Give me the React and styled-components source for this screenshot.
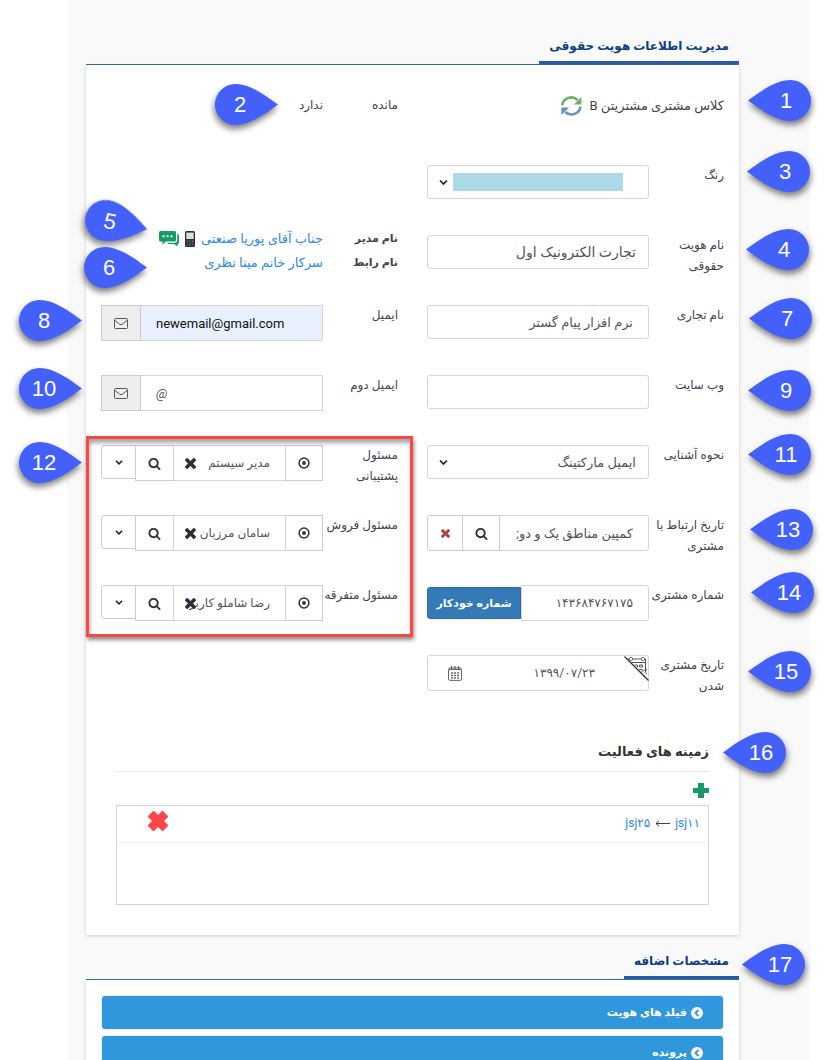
import React from "react";
import styled, { createGlobalStyle, css } from "styled-components";

const GlobalStyle = createGlobalStyle`
  *, *::before, *::after { box-sizing: border-box; }
  body { margin: 0; background: #fff; }
  button, input, select { font: inherit; color: inherit; margin: 0; }
`;

const Page = styled.div`
  position: relative;
  direction: rtl;
  min-height: 100vh;
  padding: 0 15px 0 67px;
  font-family: Roboto, "DejaVu Sans", sans-serif;
  font-size: 12px;
  line-height: 21px;
  color: #3d4552;
`;

const Frame = styled.main`
  min-height: 100vh;
  padding: 20px 71px 0 19px;
  background: #f9f9f9;
`;

const SectionHead = styled.header`
  display: flex;
  align-items: flex-end;
  height: 45px;
  border-bottom: 1px solid #2f71ae;
`;

const SectionTitle = styled.h2`
  margin: 0;
  padding: 0 10px 4px;
  border-bottom: 3px solid #2a5aa0;
  font-size: 12px;
  line-height: 21px;
  font-weight: 700;
  color: #0c3f87;
  white-space: nowrap;
`;

const Card = styled.section`
  background: #fff;
  box-shadow: 0 1px 4px rgba(0, 0, 0, 0.16);
  padding: ${(p) => (p.$list ? "16px 16px 24px" : "30px 15px")};
`;

const Columns = styled.div`
  display: grid;
  grid-template-columns: 1fr 1fr;
  column-gap: 29px;
`;

const Row = styled.div`
  display: grid;
  grid-template-columns: 75px minmax(0, 1fr);
  align-items: start;
  height: 70px;
`;

const labelText = css`
  white-space: nowrap;
  line-height: 21px;
`;
const Label = styled.label`${labelText}`;
const Caption = styled.span`${labelText}`;

const Highlight = styled.div`
  position: relative;
  &::after {
    content: "";
    position: absolute;
    inset: -9px -15px 18px;
    border: 3px solid #fb4646;
    box-shadow: 1px 3px 4px rgba(0, 0, 0, 0.45), inset 1px 4px 4px rgba(0, 0, 0, 0.35);
    pointer-events: none;
  }
`;

const ClassLine = styled.div`
  grid-column: 1 / -1;
  display: flex;
  align-items: center;
  gap: 7px;
  font-size: 13px;
  white-space: nowrap;
`;

const Contacts = styled.dl`
  display: grid;
  grid-template-columns: 75px minmax(0, 1fr);
  grid-auto-rows: 24px;
  align-content: start;
  height: 78px;
  margin: -8px 0 0;
  line-height: 24px;
`;
const ContactName = styled.dt`
  font-size: 11px;
  font-weight: 700;
  white-space: nowrap;
`;
const ContactValue = styled.dd`
  display: flex;
  align-items: center;
  gap: 6px;
  margin: 0;
  font-size: 13px;
  white-space: nowrap;
`;

const Link = styled.a`
  color: #2f8be6;
  text-decoration: none;
`;

const IconButton = styled.button`
  display: inline-flex;
  padding: 0;
  border: 0;
  background: none;
  cursor: pointer;
`;

const Field = styled.div`
  position: relative;
  display: flex;
  height: ${(p) => (p.$tall ? 36 : 34)}px;
`;

const Input = styled.input`
  flex: 1;
  min-width: 0;
  width: 100%;
  height: 100%;
  padding: 0 ${(p) => p.$pad || 15}px;
  border: 1px solid #d6d6d6;
  border-radius: ${(p) => (p.$square ? "0" : p.$joined ? "0 3px 3px 0" : "3px")};
  background: ${(p) => (p.$filled ? "#e8f0fe" : "#fff")};
  color: ${(p) => (p.$filled ? "#111" : "#555")};
  font-size: ${(p) => (p.$large ? 14 : p.$small ? 12 : 13)}px;
  &::placeholder { color: #555; font-style: italic; opacity: 1; }
`;

const Select = styled.select`
  appearance: none;
  width: 100%;
  height: 100%;
  padding: 0 12px 0 30px;
  border: 1px solid #d6d6d6;
  border-radius: 3px;
  background: #fff;
  color: #555;
  font-size: 13px;
`;

const SelectArrow = styled.span`
  position: absolute;
  left: 12px;
  top: 0;
  bottom: 0;
  display: flex;
  align-items: center;
  pointer-events: none;
`;

const Swatch = styled.span`
  position: absolute;
  inset: 8px 26px;
  background: #add8e6;
  pointer-events: none;
`;

const Addon = styled.span`
  order: 2;
  display: flex;
  align-items: center;
  justify-content: center;
  width: 40px;
  margin-right: -1px;
  border: 1px solid #ccc;
  background: #eee;
  color: #555;
`;

const ToolButton = styled.button`
  flex: none;
  display: flex;
  align-items: center;
  justify-content: center;
  width: ${(p) => p.$w}px;
  height: ${(p) => (p.$short ? 34 : 36)}px;
  margin-right: ${(p) => (p.$first ? 0 : -1)}px;
  padding: 0;
  border: 1px solid #ccc;
  border-radius: ${(p) => (p.$last ? "3px 0 0 3px" : "0")};
  background: #fff;
  color: #333;
  cursor: pointer;
`;

const PersonBox = styled.div`
  position: relative;
  flex: 1;
  min-width: 0;
  margin-right: -1px;
`;
const ClearButton = styled(IconButton)`
  position: absolute;
  left: 12px;
  top: 13px;
`;

const AutoButton = styled.button`
  flex: none;
  width: 94px;
  height: 32px;
  margin: 2px 0;
  padding: 0;
  border: 1px solid #2e6da4;
  border-radius: 3px 0 0 3px;
  background: #337ab7;
  && { color: #fff; font-weight: 700; font-size: 11px; }
  cursor: pointer;
`;

const CalendarButton = styled(IconButton)`
  position: absolute;
  left: 21px;
  top: 11px;
`;
const Corner = styled.span`
  position: absolute;
  right: 0;
  top: 1px;
  display: flex;
`;

const Activities = styled.div`
  padding: 16px 15px 0;
`;
const ActivitiesTitle = styled.h3`
  margin: 0 0 11px;
  padding-bottom: 9px;
  border-bottom: 1px solid #e6e6e6;
  font-size: 13px;
  line-height: 21px;
  color: #333;
`;
const ActivityTools = styled.div`
  display: flex;
  height: 22px;
`;
const ActivityList = styled.ul`
  height: 100px;
  margin: 0;
  padding: 0;
  border: 1px solid #ccd6db;
  list-style: none;
`;
const Activity = styled.li`
  display: flex;
  justify-content: space-between;
  align-items: flex-start;
  height: 37px;
  padding: 5px 8px 0 31px;
  border-bottom: 1px solid #f3f3f3;
`;
const ActivityPath = styled.span`
  display: flex;
  align-items: center;
  gap: 5px;
  direction: ltr;
  line-height: 24px;
`;

const PanelButton = styled.button`
  display: flex;
  align-items: center;
  gap: 4px;
  width: 100%;
  height: 33px;
  margin-bottom: 7px;
  padding: 0 20px;
  border: 0;
  border-radius: 3px;
  background: #3097dc;
  box-shadow: 0 0 0 1px #eee;
  && { color: #fff; font-size: 11px; font-weight: 700; }
  cursor: pointer;
`;

const PinBox = styled.div`
  position: absolute;
  top: ${(p) => p.$top}px;
  ${(p) => (p.$side === "right" ? `right: ${p.$x}px;` : `left: ${p.$x}px;`)}
  width: 63px;
  height: 41px;
  direction: ltr;
  pointer-events: none;
  ${(p) => p.$turn && `transform: rotate(${p.$turn}deg); transform-origin: 21px 21px;`}
`;
const PinShape = styled.svg`
  display: block;
  overflow: visible;
  filter: drop-shadow(1px 4px 3px rgba(0, 0, 0, 0.5));
  ${(p) => p.$flip && "transform: scaleX(-1);"}
`;
const PinNumber = styled.span`
  position: absolute;
  inset: 0;
  padding: ${(p) => (p.$flip ? "0 13px 0 0" : "0 0 0 13px")};
  text-align: center;
  font: 22px/42px "Liberation Sans", sans-serif;
  color: #fff;
`;

function Pin({ n, side, x, top, turn }) {
  const flip = side === "left";
  return (
    <PinBox $side={side} $x={x} $top={top} $turn={turn}>
      <PinShape width="63" height="41" viewBox="0 0 63 41" $flip={flip} aria-hidden="true">
        <path d="M0 20.5C13 11 28 0 42.5 0a20.5 20.5 0 0 1 0 41C28 41 13 30 0 20.5z" fill="#4460fb" />
      </PinShape>
      <PinNumber $flip={flip}>{n}</PinNumber>
    </PinBox>
  );
}

const pins = [
  { n: 1, side: "right", x: 14, top: 80 },
  { n: 2, side: "left", x: 215, top: 84 },
  { n: 3, side: "right", x: 15, top: 151 },
  { n: 4, side: "right", x: 16, top: 229 },
  { n: 5, side: "left", x: 85, top: 200, turn: 12 },
  { n: 6, side: "left", x: 84, top: 247 },
  { n: 7, side: "right", x: 13, top: 298 },
  { n: 8, side: "left", x: 19, top: 300 },
  { n: 9, side: "right", x: 14, top: 370 },
  { n: 10, side: "left", x: 19, top: 368 },
  { n: 11, side: "right", x: 14, top: 434 },
  { n: 12, side: "left", x: 19, top: 442 },
  { n: 13, side: "right", x: 12, top: 509 },
  { n: 14, side: "right", x: 11, top: 572 },
  { n: 15, side: "right", x: 14, top: 651 },
  { n: 16, side: "right", x: 39, top: 732 },
  { n: 17, side: "right", x: 20, top: 944 },
];

const SearchIcon = () => (
  <svg width="13" height="13" viewBox="0 0 1792 1792" fill="currentColor" aria-hidden="true">
    <path d="M1216 832q0-185-131.5-316.5t-316.5-131.5-316.5 131.5-131.5 316.5 131.5 316.5 316.5 131.5 316.5-131.5 131.5-316.5zm512 832q0 52-38 90t-90 38q-54 0-90-38l-343-342q-179 124-399 124-143 0-273.5-55.5t-225-150-150-225-55.5-273.5 55.5-273.5 150-225 225-150 273.5-55.5 273.5 55.5 225 150 150 225 55.5 273.5q0 220-124 399l343 343q37 37 37 90z" />
  </svg>
);
const CrossIcon = ({ size = 11, color = "currentColor" }) => (
  <svg width={size} height={size} viewBox="302 302 1188 1188" fill={color} aria-hidden="true">
    <path d="M1490 1322q0 40-28 68l-136 136q-28 28-68 28t-68-28l-294-294-294 294q-28 28-68 28t-68-28l-136-136q-28-28-28-68t28-68l294-294-294-294q-28-28-28-68t28-68l136-136q28-28 68-28t68 28l294 294 294-294q28-28 68-28t68 28l136 136q28 28 28 68t-28 68l-294 294 294 294q28 28 28 68z" transform="translate(0 -64)" />
  </svg>
);
const HeavyCross = () => (
  <svg width="20" height="20" viewBox="0 0 20 20" fill="#ff4747" aria-hidden="true">
    <path d="M5 0h1l4 4 4-4h1l5 5v1l-4 4 4 4v1l-5 5h-1l-4-4-4 4H5l-5-5v-1l4-4-4-4V5z" />
  </svg>
);
const PlusIcon = () => (
  <svg width="16" height="15" viewBox="0 0 16 15" fill="#189a66" aria-hidden="true">
    <path d="M5 0h6v5h5v5h-5v5H5v-5H0V5h5z" />
  </svg>
);
const ChevronIcon = ({ size = 9 }) => (
  <svg width={size} height="7" viewBox="0 0 9 7" fill="none" stroke="#222" strokeWidth="1.7" aria-hidden="true">
    <path d="M1 1.5l3.5 3.5L8 1.5" />
  </svg>
);
const TargetIcon = () => (
  <svg width="12" height="12" viewBox="0 0 12 12" aria-hidden="true">
    <circle cx="6" cy="6" r="4.9" fill="none" stroke="#333" strokeWidth="1.5" />
    <circle cx="6" cy="6" r="1.9" fill="#333" />
  </svg>
);
const MailIcon = () => (
  <svg width="14" height="11" viewBox="0 0 14 11" fill="none" stroke="#555" aria-hidden="true">
    <rect x=".5" y=".5" width="13" height="10" rx="1" />
    <path d="M.7 2.2L5.6 6.2q1.4 1 2.8 0l4.9-4" />
  </svg>
);
const RefreshIcon = () => (
  <svg width="21" height="20" viewBox="0 0 21 20" fill="none" aria-hidden="true">
    <path d="M1.2 9.4A9 8.6 0 0 1 16.6 4" stroke="#6bb06f" strokeWidth="2.6" />
    <path d="M20.4 1v7.4h-7.6z" fill="#6bb06f" />
    <path d="M19.4 10.6A9 8.6 0 0 1 4.2 16" stroke="#5f93c8" strokeWidth="2.6" />
    <path d="M.4 19v-7.4H8z" fill="#5f93c8" />
  </svg>
);
const PhoneIcon = () => (
  <svg width="10" height="16" viewBox="0 0 10 16" aria-hidden="true">
    <rect width="10" height="16" rx="1.6" fill="#26303a" />
    <rect x="1.3" y="1.6" width="7.4" height="6.4" fill="#d3e3dc" />
    <path d="M1.5 10h1.8M4.2 10h1.6M1.5 12h1.8M4.2 12h1.6M6.8 12h1.7M1.5 14h1.8M4.2 14h1.6M6.8 14h1.7" stroke="#7f8a90" strokeWidth=".8" />
    <path d="M6.8 10h1.7" stroke="#e04545" strokeWidth="1.4" />
  </svg>
);
const ChatIcon = () => (
  <svg width="20" height="16" viewBox="0 0 20 16" fill="#189a66" aria-hidden="true">
    <path d="M1.500 0h14q1.500 0 1.500 1.500v7.500q0 1.500-1.500 1.500H7L3.500 13.500v-3h-2Q0 10.500 0 9V1.500Q0 0 1.500 0z" />
    <path d="M18.200 3h.3q1.500.2 1.500 2v6.500q0 1.500-1.500 1.500v2.500L15 13H8L9.500 11.800h6q2.700 0 2.700-2.700z" />
    <path d="M3.500 4.200h2v2h-2zM7.500 4.200h2v2h-2zM11.500 4.200h2v2h-2z" fill="#fff" />
  </svg>
);
const CalendarIcon = () => (
  <svg width="14" height="15" viewBox="0 0 14 15" fill="none" stroke="#6f6764" aria-hidden="true">
    <rect x=".5" y="2" width="13" height="12.400" rx="1.500" />
    <path d="M1 3.500h12" />
    <path d="M3.500 0v3M7 0v3M10.500 0v3" strokeWidth="1.300" />
    <path d="M3 7h2M6 7h2M9 7h2M3 9.500h2M6 9.500h2M9 9.500h2M3 12h2M6 12h2M9 12h2" strokeWidth="1.600" />
  </svg>
);
const CornerCalendar = () => (
  <svg width="25" height="25" viewBox="0 0 25 25" fill="none" stroke="#555" aria-hidden="true">
    <path d="M.5.5L24.500 24.500" stroke="#333" strokeWidth="1.300" />
    <path d="M3.500 3h18v11M6.500 6.500h15" />
    <rect x="5.500" y="1.500" width="3" height="3" rx="1" fill="#fff" />
    <rect x="17.500" y="1.500" width="3" height="3" rx="1" fill="#fff" />
    <path d="M10.500 9h3v2.500M15.500 9h3v2h-3zM15 13.500h3.500" />
    <path d="M17.500 17.500c0-3 2-3.500 4.500-3M21.500 16.500l1.500 1.500M21 12l1.500 2.500-2 2" />
  </svg>
);
const CircleChevron = () => (
  <svg width="12" height="12" viewBox="0 0 12 12" aria-hidden="true">
    <circle cx="6" cy="6" r="6" fill="#fff" />
    <path d="M7.400 3L4.400 6l3 3" fill="none" stroke="#3097dc" strokeWidth="1.800" />
  </svg>
);
const LongArrow = () => (
  <svg width="15" height="7" viewBox="0 0 15 7" fill="none" stroke="#444" aria-hidden="true">
    <path d="M15 3.500H1M4 .8L1 3.500l3 2.700" />
  </svg>
);

function FormRow({ id, lines, children }) {
  return (
    <Row>
      <Label htmlFor={id}>
        {lines.map((line, i) => (
          <React.Fragment key={line}>
            {i > 0 && <br />}
            {line}
          </React.Fragment>
        ))}
      </Label>
      {children}
    </Row>
  );
}

function PersonRow({ id, lines, value }) {
  return (
    <FormRow id={id} lines={lines}>
      <Field $tall>
        <ToolButton $w={38} $first type="button" aria-label="انتخاب"><TargetIcon /></ToolButton>
        <PersonBox>
          <Input id={id} defaultValue={value} $square $small />
          <ClearButton type="button" aria-label="حذف"><CrossIcon color="#2b2f38" /></ClearButton>
        </PersonBox>
        <ToolButton $w={39} type="button" aria-label="جستجو"><SearchIcon /></ToolButton>
        <ToolButton $w={35} $last $short type="button" aria-label="فهرست"><ChevronIcon size={8} /></ToolButton>
      </Field>
    </FormRow>
  );
}

export default function App() {
  return (
    <Page lang="fa">
      <GlobalStyle />
      <Frame>
        <SectionHead><SectionTitle>مدیریت اطلاعات هویت حقوقی</SectionTitle></SectionHead>
        <Card>
          <Columns>
            <div>
              <Row>
                <ClassLine>
                  <span>کلاس مشتری مشتریتن B</span>
                  <IconButton type="button" aria-label="به‌روزرسانی"><RefreshIcon /></IconButton>
                </ClassLine>
              </Row>
              <FormRow id="color" lines={["رنگ"]}>
                <Field>
                  <Select id="color"><option></option></Select>
                  <Swatch />
                  <SelectArrow><ChevronIcon /></SelectArrow>
                </Field>
              </FormRow>
              <FormRow id="legal" lines={["نام هویت", "حقوقی"]}>
                <Field><Input id="legal" $pad={12} $large defaultValue="تجارت الکترونیک اول" /></Field>
              </FormRow>
              <FormRow id="brand" lines={["نام تجاری"]}>
                <Field><Input id="brand" defaultValue="نرم افزار پیام گستر" /></Field>
              </FormRow>
              <FormRow id="site" lines={["وب سایت"]}>
                <Field><Input id="site" /></Field>
              </FormRow>
              <FormRow id="source" lines={["نحوه آشنایی"]}>
                <Field>
                  <Select id="source"><option>ایمیل مارکتینگ</option></Select>
                  <SelectArrow><ChevronIcon /></SelectArrow>
                </Field>
              </FormRow>
              <FormRow id="history" lines={["تاریخ ارتباط با", "مشتری"]}>
                <Field $tall>
                  <Input id="history" $joined defaultValue="کمپین مناطق یک و دو;" />
                  <ToolButton $w={38} type="button" aria-label="جستجو"><SearchIcon /></ToolButton>
                  <ToolButton $w={36} $last type="button" aria-label="حذف"><CrossIcon size={9} color="#a94442" /></ToolButton>
                </Field>
              </FormRow>
              <FormRow id="number" lines={["شماره مشتری"]}>
                <Field $tall>
                  <Input id="number" $joined $small defaultValue="۱۴۳۶۸۴۷۶۷۱۷۵" />
                  <AutoButton type="button">شماره خودکار</AutoButton>
                </Field>
              </FormRow>
              <FormRow id="date" lines={["تاریخ مشتری", "شدن"]}>
                <Field $tall>
                  <Input id="date" $pad={53} $small defaultValue="۱۳۹۹/۰۷/۲۳" />
                  <Corner><CornerCalendar /></Corner>
                  <CalendarButton type="button" aria-label="تقویم"><CalendarIcon /></CalendarButton>
                </Field>
              </FormRow>
            </div>
            <div>
              <Row>
                <Caption>مانده</Caption>
                <Caption>ندارد</Caption>
              </Row>
              <Row />
              <Contacts>
                <ContactName>نام مدیر</ContactName>
                <ContactValue>
                  <Link href="#manager">جناب آقای پوریا صنعتی</Link>
                  <IconButton type="button" aria-label="تماس"><PhoneIcon /></IconButton>
                  <IconButton type="button" aria-label="پیامک"><ChatIcon /></IconButton>
                </ContactValue>
                <ContactName>نام رابط</ContactName>
                <ContactValue><Link href="#contact">سرکار خانم مینا نظری</Link></ContactValue>
              </Contacts>
              <FormRow id="mail" lines={["ایمیل"]}>
                <Field $tall>
                  <Input id="mail" type="email" dir="ltr" $square $filled defaultValue="newemail@gmail.com" />
                  <Addon><MailIcon /></Addon>
                </Field>
              </FormRow>
              <FormRow id="mail2" lines={["ایمیل دوم"]}>
                <Field $tall>
                  <Input id="mail2" type="email" dir="ltr" $square placeholder="@" />
                  <Addon><MailIcon /></Addon>
                </Field>
              </FormRow>
              <Highlight>
                <PersonRow id="support" lines={["مسئول", "پشتیبانی"]} value="مدیر سیستم" />
                <PersonRow id="sales" lines={["مسئول فروش"]} value="سامان مرزبان" />
                <PersonRow id="misc" lines={["مسئول متفرقه"]} value="رضا شاملو کاربر" />
              </Highlight>
            </div>
          </Columns>
          <Activities>
            <ActivitiesTitle>زمینه های فعالیت</ActivitiesTitle>
            <ActivityTools>
              <IconButton type="button" aria-label="افزودن"><PlusIcon /></IconButton>
            </ActivityTools>
            <ActivityList>
              <Activity>
                <ActivityPath>
                  <Link href="#jsj25">jsj۲۵</Link>
                  <LongArrow />
                  <Link href="#jsj11">jsj۱۱</Link>
                </ActivityPath>
                <IconButton type="button" aria-label="حذف"><HeavyCross /></IconButton>
              </Activity>
            </ActivityList>
          </Activities>
        </Card>
        <SectionHead><SectionTitle>مشخصات اضافه</SectionTitle></SectionHead>
        <Card $list>
          <PanelButton type="button"><CircleChevron />فیلد های هویت</PanelButton>
          <PanelButton type="button"><CircleChevron />پرونده</PanelButton>
        </Card>
      </Frame>
      {pins.map((pin) => <Pin key={pin.n} {...pin} />)}
    </Page>
  );
}
